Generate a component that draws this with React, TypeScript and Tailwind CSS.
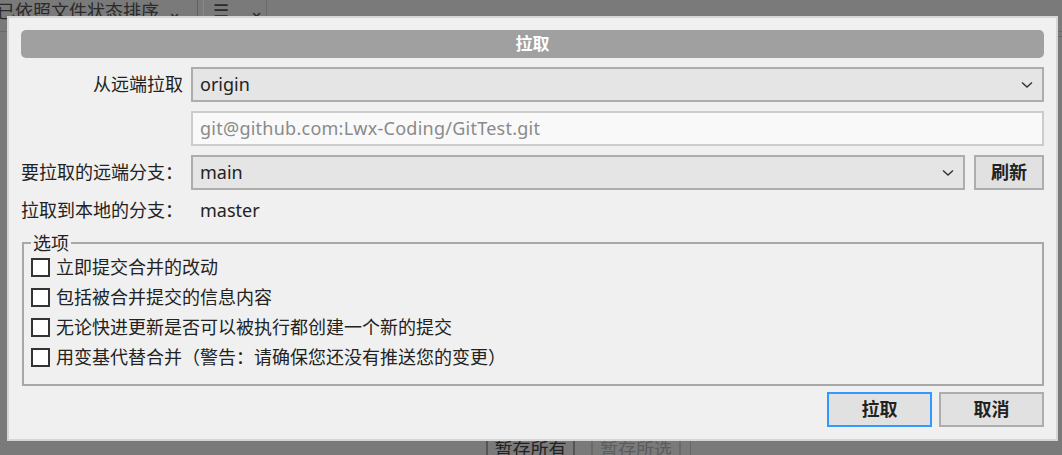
import React from "react";

const font = { fontFamily: '"Noto Sans", "Noto Sans CJK SC", sans-serif' };

const Chevron = () => (
  <svg width="12" height="8" viewBox="0 0 12 8" className="shrink-0">
    <polyline points="1,1.5 6,6 11,1.5" fill="none" stroke="#333" strokeWidth="1.4" />
  </svg>
);

const SelectBox = ({ value }: { value: string }) => (
  <div className="flex h-[35px] w-full items-center justify-between border-2 border-[#adadad] bg-[#e5e5e5] pl-[7px] pr-[9px] text-[18px] text-[#222]">
    <span>{value}</span>
    <Chevron />
  </div>
);

const Check = ({ label }: { label: string }) => (
  <div className="flex h-[30px] items-center gap-[6px]">
    <div className="h-[19px] w-[19px] border-2 border-[#333] bg-white" />
    <span className="text-[18px] text-[#222]">{label}</span>
  </div>
);

const Button = ({ label, focus }: { label: string; focus?: boolean }) => (
  <button
    className={
      focus
        ? "flex h-[35px] w-[105px] items-center justify-center border-2 border-[#3399ff] bg-[#e1e1e1] text-[18px] font-bold text-[#222]"
        : "flex h-[35px] w-[105px] items-center justify-center border-2 border-[#adadad] bg-[#e1e1e1] text-[18px] font-bold text-[#222]"
    }
  >
    {label}
  </button>
);

const App = () => {
  const options = [
    "立即提交合并的改动",
    "包括被合并提交的信息内容",
    "无论快进更新是否可以被执行都创建一个新的提交",
    "用变基代替合并（警告：请确保您还没有推送您的变更）",
  ];

  return (
    <div className="relative h-[455px] w-[1062px] overflow-hidden bg-[#7a7a7a]" style={font}>
      {/* app behind the dialog */}
      <div className="flex h-[32px] items-start border-b border-[#6a6a6a] text-[18px] text-[#2a2a2a]">
        <div className="flex h-full w-[197px] items-start gap-2 pt-[2px]">
          <span className="-ml-[3px] leading-none">已依照文件状态排序</span>
          <span className="leading-none">⌄</span>
        </div>
        <div className="h-full w-[1px] bg-[#5f5f5f]" />
        <div className="ml-[5px] h-full w-[1px] bg-[#8a8a8a]" />
        <div className="flex h-full w-[62px] items-start gap-5 pl-[9px] pt-[1px]">
          <span className="leading-none">☰</span>
          <span className="leading-none">⌄</span>
        </div>
        <div className="h-full w-[1px] bg-[#6a6a6a]" />
      </div>
      <div className="absolute left-[486px] top-[437px] flex gap-[16px] text-[18px]">
        <div className="flex h-[30px] w-[89px] items-start justify-center border-2 border-[#555] pt-[1px] leading-none text-[#222]">
          暂存所有
        </div>
        <div className="flex h-[30px] w-[90px] items-start justify-center border-2 border-[#6a6a6a] pt-[1px] leading-none text-[#5c5c5c]">
          暂存所选
        </div>
      </div>
      <div className="absolute left-[690px] top-[440px] h-[15px] w-[1px] bg-[#666]" />
      <div className="absolute left-[1058px] top-[36px] h-[1px] w-[4px] bg-[#666]" />

      {/* dialog */}
      <div className="absolute left-[7px] top-[16px] flex h-[425px] w-[1051px] flex-col border-2 border-[#d6d6d6] bg-[#f0f0f0] px-[12px] pt-[12px]">
        <div className="flex h-[28px] items-center justify-center rounded-[5px] bg-[#a0a0a0] text-[17px] font-bold text-white">
          拉取
        </div>

        <div className="mt-[9px] grid grid-cols-[162px_1fr] items-center gap-x-[8px] gap-y-[9px] text-[18px] text-[#222]">
          <span className="text-right">从远端拉取</span>
          <SelectBox value="origin" />

          <span />
          <div className="flex h-[35px] items-center border-2 border-[#cccccc] bg-[#f9f9f9] pl-[7px] text-[18px] tracking-[0.25px] text-[#8a8a8a]">
            git@github.com:Lwx-Coding/GitTest.git
          </div>

          <span>要拉取的远端分支：</span>
          <div className="flex gap-[9px]">
            <SelectBox value="main" />
            <button className="flex h-[35px] w-[70px] shrink-0 items-center justify-center border-2 border-[#adadad] bg-[#e1e1e1] text-[18px] font-bold text-[#222]">
              刷新
            </button>
          </div>
        </div>

        <div className="mt-[7px] grid h-[27px] grid-cols-[162px_1fr] items-center gap-x-[8px] text-[18px] text-[#222]">
          <span>拉取到本地的分支：</span>
          <span className="pl-[9px]">master</span>
        </div>

        <fieldset className="mt-[10px] ml-[1px] h-[152px] border-2 border-[#a8a8a8] pl-[7px]">
          <legend className="px-[2px] text-[18px] leading-[18px] text-[#222]">选项</legend>
          {options.map((o) => (
            <Check key={o} label={o} />
          ))}
        </fieldset>

        <div className="mt-[6px] flex justify-end gap-[7px]">
          <Button label="拉取" focus />
          <Button label="取消" />
        </div>
      </div>
    </div>
  );
};

export default App;
